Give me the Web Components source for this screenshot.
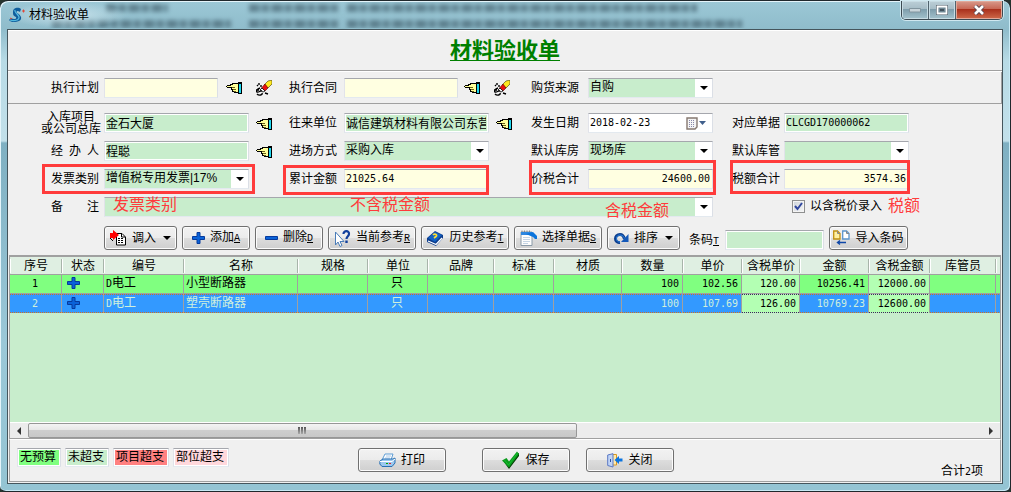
<!DOCTYPE html>
<html lang="zh-CN">
<head>
<meta charset="utf-8">
<title>材料验收单</title>
<style>
  html, body { margin: 0; height: 100%; }
  body {
    background: #26352f;
    color: #000;
    font: 12px/16px "Liberation Sans", "Noto Sans CJK SC", sans-serif;
  }
</style>
</head>
<body>
<app-window>
  <title-bar slot="caption">材料验收单</title-bar>
  <sheet-title>材料验收单</sheet-title>
  <form-grid class="plan" variant="plan">
    <form-field label="执行计划" lead narrow tone="cream" icons="hand eraser"></form-field>
    <form-field label="执行合同" narrow tone="cream" icons="hand eraser"></form-field>
    <form-field label="购货来源" third kind="select" value="自购"></form-field>
  </form-grid>
  <form-grid>
    <form-field label="入库项目|或公司总库" lead ring value="金石大厦" icons="hand"></form-field>
    <form-field label="往来单位" ring value="诚信建筑材料有限公司东营" icons="hand"></form-field>
    <form-field label="发生日期" third kind="date" tone="white" mono value="2018-02-23"></form-field>
    <form-field label="对应单据" last ring mono value="CLCGD170000062"></form-field>
    <i></i>
    <form-field label="经 办 人" lead ring value="程聪" icons="hand"></form-field>
    <form-field label="进场方式" kind="select" value="采购入库"></form-field>
    <form-field label="默认库房" third kind="select" value="现场库"></form-field>
    <form-field label="默认库管" last kind="select" value=""></form-field>
    <i></i>
    <form-field label="发票类别" lead marked kind="select" value="增值税专用发票|17%" style="--mark:-5px 34px -5px 34px"></form-field>
    <form-field label="累计金额" marked tone="cream" mono value="21025.64" style="--mark:-4px 42px -6px -6px"></form-field>
    <form-field label="价税合计" third marked numeric tone="cream" mono value="24600.00" style="--mark:-9px 16px -6px -2px"></form-field>
    <form-field label="税额合计" last marked numeric tone="cream" mono value="3574.36" style="--mark:-9px -1px -5px -2px"></form-field>
    <i></i>
    <remark-row>
      <form-field label="备 注" lead wide kind="select" value=""></form-field>
      <red-note style="left:105px">发票类别</red-note>
      <red-note style="left:342px">不含税金额</red-note>
      <red-note low style="right:63px">含税金额</red-note>
    </remark-row>
    <tax-option>以含税价录入</tax-option>
  </form-grid>
  <tool-bar>
    <action-button icon="load" caret>调入</action-button>
    <action-button icon="plus" key="A">添加</action-button>
    <action-button icon="minus" key="D">删除</action-button>
    <action-button icon="help" key="R">当前参考</action-button>
    <action-button icon="book" key="T">历史参考</action-button>
    <action-button icon="note" key="S">选择单据</action-button>
    <action-button icon="sort" caret>排序</action-button>
    <barcode-field></barcode-field>
    <action-button icon="import">导入条码</action-button>
  </tool-bar>
  <data-grid></data-grid>
  <status-footer></status-footer>
</app-window>

<script>
const ICONS = {
  hand: `<svg width="16" height="12" viewBox="0 0 16 12" shape-rendering="crispEdges">
    <path d="M1 3H4V2H6V1H12V0H16V12H12V11H8V10H6V8H5V6H1V5H0V4H1Z" fill="#000"/>
    <path d="M1 4H5V3H7V2H12V10H8V9H7V7H6V5H1Z" fill="#ffff98"/>
    <path d="M6 5H9V6H6ZM7 7H10V8H7ZM8 9H10V10H8Z" fill="#6a6018"/>
    <path d="M13 2H15V11H13Z" fill="#20d8f0"/><path d="M12 1H13V11H12ZM15 0H16V12H15Z" fill="#000"/></svg>`,
  eraser: `<svg width="16" height="16" viewBox="0 0 16 16">
    <path d="M12 1L16 0V4L12 8L8 5Z" fill="#ffe820" stroke="#3a3500" stroke-width=".6"/>
    <path d="M9 4L12 8L9 11L5.500 8Z" fill="#e81010" stroke="#500" stroke-width=".6"/>
    <path d="M6 8L9 11L7 12L4 10Z" fill="#fff" stroke="#000" stroke-width=".8"/>
    <path d="M3 3V5M5 5V7M1 5L2 6M4 8C1 9 0 11 1 12C3 13 4 10 6 11M1 14C3 16 7 15 6 13M0 10H3M9 13L12 14" fill="none" stroke="#000" stroke-width="1.400"/></svg>`,
  calendar: `<svg width="21" height="13" viewBox="0 0 21 13"><path d="M1 1H11V10L9 12H1Z" fill="#f5f5f5" stroke="#857870" stroke-width="1.400"/>
    <path d="M3 3.500H9M3 5.500H9M3 7.500H9M3 9.500H8" stroke="#88a" stroke-dasharray="1 1"/><path d="M13 4H20L16.500 8Z" fill="#405f8c"/></svg>`,
  load: `<svg width="17" height="16" viewBox="0 0 17 16"><path d="M6.500 3.500H12L15.500 7V15H6.500Z" fill="#fff" stroke="#000"/>
    <path d="M11.500 3.500V7H15" fill="none" stroke="#000"/><path d="M8 8.500H14M8 10.500H14M8 12.500H14" stroke="#000" stroke-dasharray="2 1"/>
    <path d="M0 3H3V0L9 5L3 10V8H0Z" fill="#f00"/><path d="M0 8L3 11" stroke="#000"/></svg>`,
  plus: `<svg width="13" height="12" viewBox="0 0 13 12"><path d="M5 .5H8V4.500H12.500V7.500H8V11.500H5V7.500H.5V4.500H5Z" fill="#0a62d8" stroke="#063a9c"/></svg>`,
  minus: `<svg width="13" height="12" viewBox="0 0 13 12"><path d="M.5 4.500H12.500V7.500H.5Z" fill="#0a62d8" stroke="#063a9c"/></svg>`,
  help: `<svg width="17" height="17" viewBox="0 0 17 17"><path d="M1.500 2V15L4 12L6 16.500L8 15.500L6 11.500H10Z" fill="#fff" stroke="#4a7cb8"/>
    <path d="M9.500 4C9.500 0 15.500 .5 15 4C15 6 12.500 6.500 12.500 9" fill="none" stroke="#123f9c" stroke-width="2.200"/><path d="M11.300 10.500H13.700V13H11.300Z" fill="#123f9c"/></svg>`,
  book: `<svg width="18" height="17" viewBox="0 0 18 17"><path d="M1 8L9 1L17 5V8L10 16L1 12Z" fill="#0d3c8c"/><path d="M2 8L9 2L16 5L9 12Z" fill="#1262c4"/>
    <path d="M2 11L10 14.500L16 8" fill="none" stroke="#fff" stroke-width="1.300"/><path d="M7 5C9 3 12 5 10 6.500L8 8" fill="none" stroke="#ffe030" stroke-width="1.600"/></svg>`,
  note: `<svg width="17" height="16" viewBox="0 0 17 16"><path d="M1 2H12V15.500H1Z" fill="#fdfdfd" stroke="#8a9aa8"/>
    <path d="M1 2H12V5H1Z" fill="#2c86e0"/><path d="M2 .5V2M4.500 .5V2M7 .5V2M9.500 .5V2" stroke="#888"/><path d="M6 4L13 2L17 6V9H15L13 7Z" fill="#0c74dc"/>
    <path d="M3 7.500H10M3 9.500H10M3 11.500H10M3 13.500H8" stroke="#c4d4e4"/></svg>`,
  sort: `<svg width="15" height="12" viewBox="0 0 15 12"><path d="M6 10.500C0 11 0 2.500 6 2.500C9 2.500 10 5 10.500 7" fill="none" stroke="#0d3f90" stroke-width="3"/>
    <path d="M6 10C1.500 10.500 1 3 6 3C9 3 10 5 10.500 7" fill="none" stroke="#2c83e0" stroke-width="1"/><path d="M14.500 2V10H7Z" fill="#1458b8"/></svg>`,
  import: `<svg width="17" height="16" viewBox="0 0 17 16"><path d="M.7 1H4.500L7 3.500V9H.7Z" fill="#fff0a0" stroke="#c09010" stroke-width="1.300"/>
    <path d="M9.700 1H13.500L16 3.500V9H9.700Z" fill="#fff" stroke="#5a94cc" stroke-width="1.300"/><path d="M4.500 1V3.500H7M13.500 1V3.500H16" fill="none" stroke="#888"/>
    <path d="M13 12.500H5M7 10.500L4.500 12.500L7 14.500" fill="none" stroke="#1048a8" stroke-width="1.400"/></svg>`,
  print: `<svg width="17" height="15" viewBox="0 0 17 15"><path d="M6 1L14 1L12 7H3Z" fill="#fff" stroke="#5d9cd4"/><path d="M7 3H12M6 5H11" stroke="#a8c8e8"/>
    <path d="M1 8L4 6H14L16 5V10L13 13.500H3L.8 11Z" fill="#9cc8ee" stroke="#2870b4"/><path d="M1 8.500H13L16 6" fill="none" stroke="#fff"/>
    <path d="M7 10.500H9" stroke="#0a0"/><path d="M10 10.500H12" stroke="#e22"/></svg>`,
  save: `<svg width="18" height="18" viewBox="0 0 18 18"><path d="M2 11L5 9L7 12L15 3L17 2V5L7 18Q4 14 2 11Z" fill="#043c04"/>
    <path d="M0 9.500L4.500 7L7 10.500L15 .5L17 3L7 16.500Z" fill="#0a9c1c"/><path d="M2.500 9L6.500 14L15.500 2" fill="none" stroke="#15c030"/></svg>`,
  close: `<svg width="16" height="15" viewBox="0 0 16 15"><path d="M4 1.500H9.500V12H4Z" fill="#ffe9a8" stroke="#d89820"/><path d="M.7 2L6 .7V14L.7 12.500Z" fill="#c0d4f6" stroke="#5a78c4"/>
    <path d="M3.500 6V9" stroke="#3050a0"/><path d="M15.500 5.500H12V3L7.500 7L12 11V8.500H15.500Z" fill="#0a74e0"/></svg>`,
  logo: `<svg width="16" height="16" viewBox="0 0 16 16"><path d="M4 5C4 0 10 0 12 2L11 5C8 3 7 4 8 6C12 8 14 12 10 14C6 16 1 15 0 13L2 11C5 13 8 12 7 10C4 9 4 7 4 5Z" fill="#0f5d9c"/>
    <path d="M6 3C5 6 11 8 10 11C9 14 4 14 1 13" fill="none" stroke="#54b9e0" stroke-width="1.200"/><path d="M1 11L3 12M13 4H16M14.500 2.500V5.500" stroke="#e04838"/></svg>`
};

/* Shared base: every component renders its markup into an open shadow root. */
class View extends HTMLElement {
  connectedCallback() {
    if (this.shadowRoot) return;
    const t = document.createElement('template');
    t.innerHTML = `<style>*{box-sizing:border-box}svg{display:block}${this.css()}</style>${this.html()}`;
    this.attachShadow({ mode: 'open' }).append(t.content.cloneNode(true));
  }
  attr(n, d = '') { return this.getAttribute(n) ?? d; }
}

const SUNKEN = `border:1px solid;border-color:#a5a7ad #dbdfe6 #e3e9ef #e2e3ea;`;
const BUTTON = `display:flex;align-items:center;justify-content:center;width:100%;height:24px;margin:0;padding:0;
  font:inherit;color:#000;border:1px solid #707070;border-radius:3px;
  background:linear-gradient(#f2f2f2,#ebebeb 50%,#ddd 50%,#cfcfcf);box-shadow:inset 0 0 0 1px #fcfcfc;`;

customElements.define('app-window', class extends View {
  css() { return `
    :host{display:flex;flex-direction:column;min-height:100vh;box-sizing:border-box;padding:0 7px 7px;
      border:1px solid #20282c;border-width:1px 1px 1px 0;border-radius:8px 8px 6px 6px;
      background:linear-gradient(#9cc8d6,#8fbccb 28px,#b8dbe6 60px,#c2e0ea 140px,#7fb0c2 142px,#9bc8d8 70%,#94c4d3);
      box-shadow:inset 1px 1px 0 #e4f4fa,inset -1px -1px 0 #c8eaf5}
    main{flex:1;display:flex;flex-direction:column;border:1px solid #45555c;background:#f0f0f0;box-shadow:inset 0 1px 0 #fff}`; }
  html() { return `<slot name="caption"></slot><main><slot></slot></main>`; }
});

customElements.define('title-bar', class extends View {
  css() { return `
    :host{display:flex;align-items:flex-start;height:28px;position:relative}
    .haze{position:absolute;inset:1px 100px 1px 0;overflow:hidden;z-index:0}
    .haze b{position:absolute;height:8px;filter:blur(2px);opacity:.55;
      background:repeating-linear-gradient(90deg,#334e5b 0 9px,#5f8796 10px 13px,#3a5663 14px 19px,#739dab 20px 23px)}
    .glow{position:absolute;left:0;top:1px;width:120px;height:26px;background:radial-gradient(closest-side,#d9edf4cc,#d9edf400)}
    .name{position:relative;display:flex;gap:4px;align-items:center;padding:6px 0 0 2px;flex:1;color:#000;z-index:1}
    .caps{display:flex;position:relative;height:19px;border:1px solid #3d4a52;border-top:0;border-radius:0 0 5px 5px;overflow:hidden;box-shadow:0 0 0 1px #d0e8f0}
    button{margin:0;padding:0;border:0;border-right:1px solid #51636d;width:27px;height:18px;display:grid;place-items:center;
      background:linear-gradient(#bccfd7,#a6bcc6 45%,#7e9dab 46%,#a4c3cd);box-shadow:inset 0 0 0 1px #c8dce4}
    button.x{width:46px;border-right:0;background:linear-gradient(#d89a8c,#c76653 45%,#a9301c 46%,#cf6a4a);box-shadow:inset 0 0 0 1px #e2a99a}`; }
  html() { return `
    <div class="haze"><b style="left:11%;width:7%;top:2px"></b><b style="left:5%;width:20%;top:18px"></b>
      <b style="left:27%;width:10%;top:2px"></b><b style="left:27%;width:10%;top:18px"></b>
      <b style="left:38%;width:39%;top:2px"></b><b style="left:38%;width:44%;top:18px"></b></div>
    <div class="glow"></div>
    <div class="name">${ICONS.logo}<span><slot></slot></span></div>
    <div class="caps">
      <button aria-label="最小化"><svg width="12" height="6" viewBox="0 0 12 6"><path d="M.5 1.500H11.500V5H.5Z" fill="#c8d4da" stroke="#82959f"/></svg></button>
      <button aria-label="最大化"><svg width="12" height="10" viewBox="0 0 12 10"><path d="M1.500 1.500H10.500V8.500H1.500Z" fill="none" stroke="#4b5964" stroke-width="3"/><path d="M1.500 1.500H10.500V8.500H1.500Z" fill="#718995" stroke="#fff" stroke-width="1.800"/><path d="M4 4H8V6H4Z" fill="#44535e"/></svg></button>
      <button class="x" aria-label="关闭窗口"><svg width="12" height="10" viewBox="0 0 12 10"><path d="M2 1L10 9M10 1L2 9" stroke="#5b4650" stroke-width="4.500"/><path d="M2 1L10 9M10 1L2 9" stroke="#fff" stroke-width="2.600"/></svg></button>
    </div>`; }
});

customElements.define('sheet-title', class extends View {
  css() { return `:host{display:block;height:42px;box-sizing:border-box;padding-top:6px;border-bottom:1px solid #fff;box-shadow:inset 0 -1px 0 #a0a0a0;text-align:center}
    h1{margin:0;font-size:22px;line-height:30px;font-weight:700;color:#008000;text-decoration:underline;text-decoration-thickness:1px;text-underline-offset:2px}`; }
  html() { return `<h1><slot></slot></h1>`; }
});

customElements.define('form-grid', class extends View {
  css() { return `
    :host{display:grid;grid-template-columns:281fr 242fr 201fr 177fr 93fr;row-gap:8px;padding-top:9px}
    :host([variant=plan]){padding:6px 0 5px;border-bottom:1px solid #a0a0a0;box-shadow:inset -1px 0 0 #a0a0a0}`; }
  html() { return `<slot></slot>`; }
});

customElements.define('form-field', class extends View {
  css() {
    const tone = { cream: '#ffffe1', white: '#fff' }[this.attr('tone')] || '#c8edcc';
    return `
    :host{display:flex;align-items:center;position:relative;height:20px;min-width:0}
    label{flex:none;display:block;width:55px;line-height:16px;white-space:nowrap}
    :host([third]) label{width:57px}
    :host([last]) label{width:52px}
    :host([lead]) label{width:96px;padding:0 5px 0 43px;text-align-last:justify}
    label.two{line-height:12px}
    :host([lead]) label.two{padding:0 0 0 33px;text-align-last:left}
    .two span{display:block;width:60px;text-align-last:center}
    .box{position:relative;flex:1;min-width:0;height:20px;${SUNKEN}background:${tone};display:flex;align-items:center}
    :host([ring]) .box{box-shadow:inset 0 0 0 1px #fff}
    input,select{appearance:none;flex:1;min-width:0;width:100%;height:18px;margin:0;padding:0 2px 2px 1px;border:0;border-radius:0;background:none;
      font:inherit;color:#000;outline:0;text-overflow:clip}
    :host([mono]) input{font:10px "DejaVu Sans Mono",monospace}
    :host([numeric]) input{text-align:right}
    .drop{flex:none;width:17px;height:18px;background:#fff;display:grid;place-items:center;pointer-events:none}
    .cal{flex:none;padding-right:5px}
    .tail{flex:none;display:flex;align-items:center;width:42px;padding:2px 0 0 7px;gap:14px}
    :host([ring]) .tail{padding-left:7px}
    :host([lead]) .tail{width:40px}
    :host([narrow]) .tail{width:73px;padding:0 0 0 6px}
    :host([narrow][lead]) .tail{width:71px;padding-left:8px}
    :host([third]) .tail,:host([wide]) .tail{width:19px}
    :host([last]) .tail{display:none}
    :host([marked])::after{content:"";position:absolute;inset:var(--mark);border:3px solid #ff3b3b;pointer-events:none}`; }
  html() {
    const kind = this.attr('kind', 'text'), v = this.attr('value'), label = this.attr('label');
    const two = label.includes('|');
    const text = two ? label.split('|').map(s => `<span>${s}</span>`).join('') : label;
    const control = kind === 'select'
      ? `<select id="c"><option>${v}</option></select><div class="drop"><svg width="8" height="4" viewBox="0 0 8 4"><path d="M0 0H8L4 4Z"/></svg></div>`
      : `<input id="c" type="text" value="${v}">` + (kind === 'date' ? `<div class="cal">${ICONS.calendar}</div>` : '');
    const icons = this.attr('icons').split(' ').filter(Boolean).map(n => ICONS[n]).join('');
    return `<label for="c" class="${two ? 'two' : ''}">${text}</label><div class="box">${control}</div><div class="tail">${icons}</div>`;
  }
});

customElements.define('remark-row', class extends View {
  css() { return `:host{display:block;position:relative;grid-column:span 3}`; }
  html() { return `<slot></slot>`; }
});

customElements.define('red-note', class extends View {
  css() { return `:host{position:absolute;top:-2px;font-size:16px;line-height:20px;color:#ff3b3b;white-space:nowrap;pointer-events:none}
    :host([low]){top:4px}`; }
  html() { return `<slot></slot>`; }
});

customElements.define('tax-option', class extends View {
  css() { return `:host{display:flex;align-items:center;grid-column:span 2;padding-left:60px;height:18px}
    label{display:flex;align-items:center;gap:5px;white-space:nowrap}
    input{appearance:none;display:block;margin:0;width:13px;height:13px;border:1px solid #8e8f8f;background:linear-gradient(135deg,#cdd3da,#f6f6f6);box-shadow:inset 0 0 0 1px #f4f4f4}
    .tick{position:relative;display:block}
    .tick svg{position:absolute;inset:2px;pointer-events:none}
    em{font-style:normal;font-size:16px;color:#ff3b3b;padding-left:6px;white-space:nowrap}`; }
  html() { return `<label for="t"><span class="tick"><input id="t" type="checkbox" checked><svg width="9" height="9" viewBox="0 0 9 9"><path d="M1 4L3.500 7L8 1" fill="none" stroke="#31479e" stroke-width="2"/></svg></span><slot></slot></label><em>税额</em>`; }
});

customElements.define('tool-bar', class extends View {
  css() { return `:host{display:flex;gap:5px;padding:9px 0 5px 96px}
    ::slotted(action-button){flex:0 0 88px}
    ::slotted([caret]){flex-basis:73px}
    ::slotted([icon=plus]),::slotted([icon=minus]){flex-basis:68px}
    ::slotted([icon=import]){flex-basis:79px}`; }
  html() { return `<slot></slot>`; }
});

customElements.define('action-button', class extends View {
  css() { return `:host{display:block;min-width:0}
    button{${BUTTON}gap:5px;white-space:nowrap}
    u{font-family:"Liberation Mono",monospace;font-size:10px;text-underline-offset:1px}
    .caret{margin-left:2px}`; }
  html() {
    const key = this.attr('key');
    return `<button type="button">${ICONS[this.attr('icon')]}<span><slot></slot>${key ? `<u>${key}</u>` : ''}</span>${this.hasAttribute('caret')
      ? '<svg class="caret" width="8" height="4" viewBox="0 0 8 4"><path d="M0 0H8L4 4Z"/></svg>' : ''}</button>`;
  }
});

customElements.define('barcode-field', class extends View {
  css() { return `:host{display:flex;align-items:center;padding:3px 0 0 4px;height:24px;box-sizing:border-box}
    label{width:36px;white-space:nowrap}
    u{font:10px "Liberation Mono",monospace;text-underline-offset:1px}
    input{width:99px;height:20px;margin:0;padding:0 2px;${SUNKEN}background:#c8edcc;box-shadow:inset 0 0 0 1px #fff;font:inherit;outline:0}`; }
  html() { return `<label for="b">条码<u>T</u></label><input id="b" type="text">`; }
});

customElements.define('data-grid', class extends View {
  css() { return `
    :host{flex:1;display:flex;flex-direction:column;margin:0 1px;border:1px solid #a0a0a0;border-width:2px 1px 1px 1px;background:#c8edcc}
    table{table-layout:fixed;width:100%;border-collapse:separate;border-spacing:0}
    th{height:18px;padding:0;font-weight:400;line-height:16px;background:#dfefe2;border-bottom:1px solid #a0a0a0;white-space:nowrap;
      background-image:linear-gradient(#a8b4aa,#a8b4aa),linear-gradient(#fff,#fff);background-size:1px 14px,1px 14px;
      background-position:right 0 top 2px,left 0 top 2px;background-repeat:no-repeat}
    th:last-child{background-image:linear-gradient(#fff,#fff);background-size:1px 14px;background-position:left 0 top 2px}
    td{height:19px;padding:0 3px 2px 2px;line-height:15px;white-space:nowrap;overflow:hidden;background:#80ff80;border-right:1px solid #a0a0a0;border-bottom:1px solid #a0a0a0}
    td:last-child{border-right:0}
    .c{text-align:center}.r{text-align:right}
    .m{font:10px "DejaVu Sans Mono",monospace}
    td.hi{background:#b3ffb3}
    tr.sel td{--dot:#d07020;--fill:#3399ff;color:#d0f0dc;border-bottom:0;padding:1px 3px 2px 2px;
      background:repeating-linear-gradient(90deg,var(--dot) 0 1px,var(--fill) 1px 2px) 0 0/100% 1px no-repeat,
        repeating-linear-gradient(90deg,var(--dot) 0 1px,var(--fill) 1px 2px) 0 100%/100% 1px no-repeat,var(--fill)}
    tr.sel td.hi{--dot:#402060;--fill:#b3ffb3;color:#000}
    td svg{margin-left:3px}
    .space{flex:1}
    .bar{display:flex;height:16px;background:#ececec;border-top:1px solid #fff}
    .bar button{flex:0 0 18px;padding:0;margin:0;border:0;background:#ececec;display:grid;place-items:center}
    .track{flex:1}
    .thumb{width:57.5%;height:15px;border:1px solid #979797;border-radius:2px;display:flex;align-items:center;justify-content:center;gap:1px;
      background:linear-gradient(#f4f4f4,#e6e6e6 50%,#cecece 50%,#c8c8c8)}
    .thumb i{width:2px;height:7px;background:linear-gradient(#555,#aaa)}`; }
  html() {
    const cols = [['序号',52],['状态',42],['编号',80],['名称',114],['规格',70],['单位',60],['品牌',66],['标准',60],['材质',68],['数量',61],['单价',59],['含税单价',58],['金额',69],['含税金额',61],['库管员',66],['','']];
    const rows = [['1','小型断路器','102.56','120.00','10256.41','12000.00'],['2','塑壳断路器','107.69','126.00','10769.23','12600.00']];
    const row = (r, i) => `<tr class="${i ? 'sel' : ''}"><td class="c"><span class="m">${r[0]}</span></td><td>${ICONS.plus}</td>
      <td><span class="m">D</span>电工</td><td>${r[1]}</td><td></td><td class="c">只</td><td></td><td></td><td></td>
      <td class="r m">100</td><td class="r m">${r[2]}</td><td class="r m hi">${r[3]}</td><td class="r m">${r[4]}</td><td class="r m hi">${r[5]}</td><td></td><td></td></tr>`;
    return `<table><colgroup>${cols.map(c => `<col${c[1] ? ` style="width:${c[1]}px"` : ''}>`).join('')}</colgroup>
      <thead><tr>${cols.map(c => `<th>${c[0]}</th>`).join('')}</tr></thead><tbody>${rows.map(row).join('')}</tbody></table>
      <div class="space"></div>
      <div class="bar"><button aria-label="向左"><svg width="4" height="8" viewBox="0 0 4 8"><path d="M4 0V8L0 4Z" fill="#333"/></svg></button>
      <div class="track"><div class="thumb"><i></i><i></i><i></i></div></div>
      <button aria-label="向右"><svg width="4" height="8" viewBox="0 0 4 8"><path d="M0 0V8L4 4Z" fill="#333"/></svg></button></div>`;
  }
});

customElements.define('status-footer', class extends View {
  css() { return `
    :host{display:grid;grid-template-columns:350fr 316fr 328fr;height:43px;margin:0 1px 1px 1px;box-sizing:border-box;
      border:1px solid #a0a0a0;border-top-color:#fff}
    .legend{display:flex;gap:4px;padding:8px 0 0 7px}
    .legend span{height:19px;padding:0 4px 0 2px;line-height:16px;${SUNKEN}box-shadow:inset 0 0 0 1px #fff;white-space:nowrap}
    .acts{display:grid;grid-template-columns:88px 36px 88px 16px 88px;padding-top:8px}
    .acts :nth-child(2){grid-column:3}.acts :nth-child(3){grid-column:5}
    .sum{text-align:right;padding:23px 17px 0 0}
    .m{font:10px "DejaVu Sans Mono",monospace}`; }
  html() { return `
    <div class="legend"><span style="background:#80ff80">无预算</span><span style="background:#c8edcc">未超支</span><span style="background:#ff8080">项目超支</span><span style="background:#ffd8dc">部位超支</span></div>
    <div class="acts"><action-button icon="print">打印</action-button><action-button icon="save">保存</action-button><action-button icon="close">关闭</action-button></div>
    <div class="sum">合计<span class="m">2</span>项</div>`; }
});
</script>
</body>
</html>
